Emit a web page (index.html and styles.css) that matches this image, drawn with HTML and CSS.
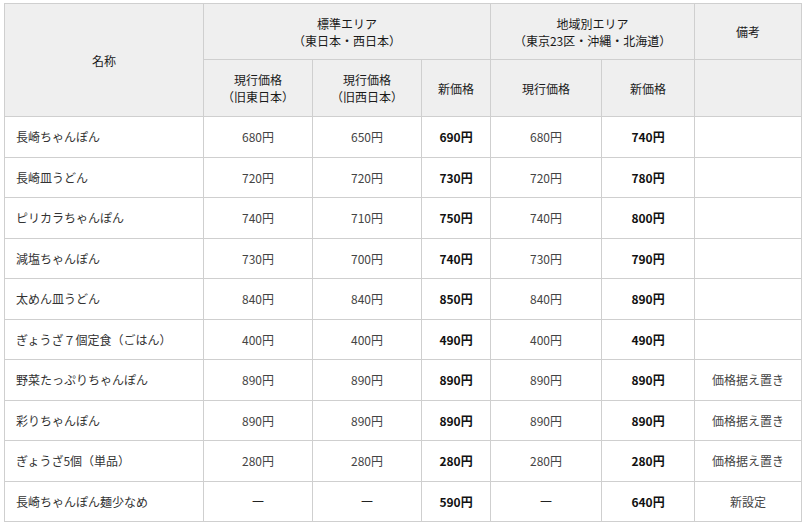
FILE: index.html
```html
<!DOCTYPE html>
<html lang="ja">
<head>
<meta charset="utf-8">
<link rel="stylesheet" href="styles.css">
</head>
<body>
<div class="wrap">
<table class="price">
<colgroup>
<col class="c-name"><col class="c-p1"><col class="c-p2"><col class="c-p3"><col class="c-p4"><col class="c-p5"><col class="c-note">
</colgroup>
<thead>
<tr class="h1">
<th rowspan="2">名称</th>
<th colspan="3">標準エリア<br>（東日本・西日本）</th>
<th colspan="2">地域別エリア<br>（東京23区・沖縄・北海道）</th>
<th>備考</th>
</tr>
<tr class="h2">
<th>現行価格<br>（旧東日本）</th>
<th>現行価格<br>（旧西日本）</th>
<th>新価格</th>
<th>現行価格</th>
<th>新価格</th>
<th></th>
</tr>
</thead>
<tbody>
<tr><td class="name">長崎ちゃんぽん</td><td>680円</td><td>650円</td><td class="new">690円</td><td>680円</td><td class="new">740円</td><td></td></tr>
<tr><td class="name">長崎皿うどん</td><td>720円</td><td>720円</td><td class="new">730円</td><td>720円</td><td class="new">780円</td><td></td></tr>
<tr><td class="name">ピリカラちゃんぽん</td><td>740円</td><td>710円</td><td class="new">750円</td><td>740円</td><td class="new">800円</td><td></td></tr>
<tr><td class="name">減塩ちゃんぽん</td><td>730円</td><td>700円</td><td class="new">740円</td><td>730円</td><td class="new">790円</td><td></td></tr>
<tr><td class="name">太めん皿うどん</td><td>840円</td><td>840円</td><td class="new">850円</td><td>840円</td><td class="new">890円</td><td></td></tr>
<tr><td class="name">ぎょうざ７個定食（ごはん）</td><td>400円</td><td>400円</td><td class="new">490円</td><td>400円</td><td class="new">490円</td><td></td></tr>
<tr><td class="name">野菜たっぷりちゃんぽん</td><td>890円</td><td>890円</td><td class="new">890円</td><td>890円</td><td class="new">890円</td><td>価格据え置き</td></tr>
<tr><td class="name">彩りちゃんぽん</td><td>890円</td><td>890円</td><td class="new">890円</td><td>890円</td><td class="new">890円</td><td>価格据え置き</td></tr>
<tr><td class="name">ぎょうざ5個（単品）</td><td>280円</td><td>280円</td><td class="new">280円</td><td>280円</td><td class="new">280円</td><td>価格据え置き</td></tr>
<tr><td class="name">長崎ちゃんぽん麺少なめ</td><td class="dash">—</td><td class="dash">—</td><td class="new">590円</td><td class="dash">—</td><td class="new">640円</td><td>新設定</td></tr>
</tbody>
</table>
</div>
</body>
</html>
```
FILE: styles.css
```css
html, body {
  margin: 0;
  padding: 0;
  background: #ffffff;
}
.wrap {
  padding: 3px 0 0 4px;
}
.price {
  border-collapse: collapse;
  table-layout: fixed;
  width: 797px;
  font-family: "Noto Sans CJK JP", "Noto Sans", sans-serif;
  font-size: 12px;
  line-height: 17px;
  color: #333333;
}
.c-name { width: 199px; }
.c-p1 { width: 109px; }
.c-p2 { width: 109px; }
.c-p3 { width: 69px; }
.c-p4 { width: 111px; }
.c-p5 { width: 93px; }
.c-note { width: 107px; }
.price th, .price td {
  border: 1px solid #cfcfcf;
  padding: 0;
  text-align: center;
  vertical-align: middle;
}
.price th {
  background: #efefef;
  font-weight: normal;
  color: #1a1a1a;
}
.h1 { height: 56px; }
.h2 { height: 57px; }
.price tbody tr { height: 40.5px; }
.price td { color: #444444; }
.price td.name {
  text-align: left;
  padding-left: 11px;
  color: #333333;
}
.price td.new {
  font-weight: bold;
  color: #111111;
}
.price td.dash {
  font-family: "DejaVu Sans", sans-serif;
  color: #222222;
}
```
